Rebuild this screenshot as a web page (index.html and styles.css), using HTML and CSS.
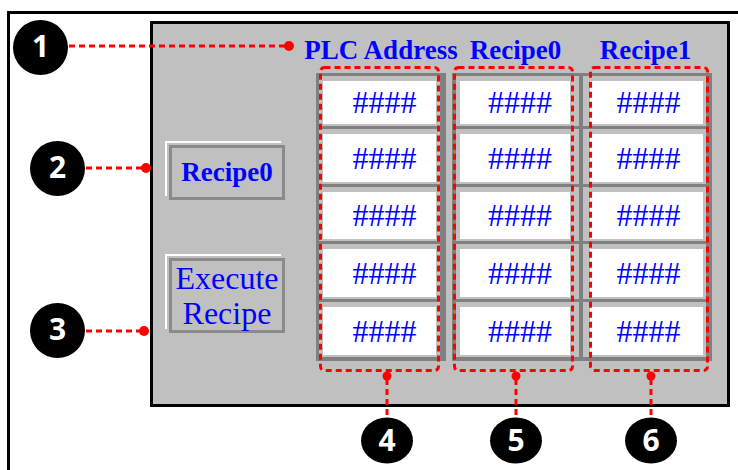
FILE: index.html
```html
<!DOCTYPE html>
<html lang="en">
<head>
  <meta charset="UTF-8" />
  <title>Recipe Screen</title>
  <link rel="stylesheet" href="styles.css">
</head>
<body>

  <div class="frame">
    <div class="panel">

      <!-- left side: recipe buttons -->
      <div class="side">
        <div class="btn btn-recipe">Recipe0</div>
        <div class="btn btn-exec">Execute<br>Recipe</div>
      </div>

      <!-- address and recipe tables -->
      <div class="tables">
        <div class="col col-addr">
          <div class="col-head">PLC Address</div>
          <div class="cells">
            <div class="cell"><span>####</span></div>
            <div class="cell"><span>####</span></div>
            <div class="cell"><span>####</span></div>
            <div class="cell"><span>####</span></div>
            <div class="cell"><span>####</span></div>
          </div>
        </div>
        <div class="col col-r0">
          <div class="col-head">Recipe0</div>
          <div class="cells">
            <div class="cell"><span>####</span></div>
            <div class="cell"><span>####</span></div>
            <div class="cell"><span>####</span></div>
            <div class="cell"><span>####</span></div>
            <div class="cell"><span>####</span></div>
          </div>
        </div>
        <div class="col col-r1">
          <div class="col-head">Recipe1</div>
          <div class="cells">
            <div class="cell"><span>####</span></div>
            <div class="cell"><span>####</span></div>
            <div class="cell"><span>####</span></div>
            <div class="cell"><span>####</span></div>
            <div class="cell"><span>####</span></div>
          </div>
        </div>
      </div>

    </div>
  </div>

  <!-- callouts -->
  <svg class="notes" width="738" height="470" viewBox="0 0 738 470">
    <g class="dash">
      <line x1="69" y1="46" x2="286" y2="46" />
      <line x1="86" y1="168" x2="142" y2="168" />
      <line x1="86" y1="331" x2="140" y2="331" />
      <line x1="387" y1="379" x2="387" y2="419" />
      <line x1="516" y1="379" x2="516" y2="419" />
      <line x1="651" y1="379" x2="651" y2="419" />
      <rect x="320.5" y="67.5" width="118" height="303" rx="4" />
      <rect x="454.5" y="67.5" width="118" height="303" rx="4" />
      <rect x="590.5" y="67.5" width="117" height="303" rx="4" />
    </g>
    <g class="dot">
      <circle cx="289" cy="46" r="5" />
      <circle cx="146" cy="168" r="5" />
      <circle cx="144" cy="331" r="5" />
      <circle cx="387" cy="376" r="4.5" />
      <circle cx="516" cy="376" r="4.5" />
      <circle cx="651" cy="376" r="4.5" />
    </g>
    <g class="badge">
      <circle cx="40.5" cy="47.5" r="27.5" />
      <circle cx="57.5" cy="168.5" r="27.5" />
      <circle cx="57.5" cy="330.5" r="27.5" />
      <ellipse cx="387" cy="440.5" rx="26" ry="23" />
      <ellipse cx="516" cy="440.5" rx="26" ry="23" />
      <ellipse cx="651" cy="440.5" rx="26" ry="23" />
    </g>
    <g class="num">
      <text x="40.5" y="57">1</text>
      <text x="57.5" y="178">2</text>
      <text x="57.5" y="340">3</text>
      <text x="387" y="451">4</text>
      <text x="516" y="451">5</text>
      <text x="651" y="451">6</text>
    </g>
  </svg>

</body>
</html>
```

FILE: styles.css
```css
body {
  margin: 0;
  width: 738px;
  height: 470px;
  overflow: hidden;
  background: #fff;
  position: relative;
  font-family: "Liberation Serif", "Times New Roman", serif;
}
.frame {
  margin: 11px 0 0 7px;
  height: 470px;
  border-top: 3px solid #000;
  border-left: 3px solid #000;
  box-sizing: border-box;
  padding: 7px 0 0 140px;
}
.panel {
  width: 580px;
  height: 386px;
  box-sizing: border-box;
  border: 3px solid #000;
  background: #c0c0c0;
  display: flex;
}
.side {
  width: 163px;
  flex-shrink: 0;
  padding: 121px 0 0 16px;
  box-sizing: border-box;
}
.btn {
  width: 116px;
  box-sizing: border-box;
  border: 3px solid #8a8a8a;
  box-shadow: -2px -2px 0 #c0c0c0, -4px -4px 0 #fff;
  color: #0000ff;
  display: flex;
  flex-direction: column;
  align-items: center;
  justify-content: center;
  text-align: center;
}
.btn-recipe {
  height: 55px;
  margin-bottom: 58px;
  font-size: 27px;
  font-weight: bold;
}
.btn-exec {
  height: 75px;
  font-size: 32px;
  line-height: 35px;
  white-space: nowrap;
}
.tables {
  display: flex;
}
.col-head {
  height: 49px;
  padding-top: 11px;
  box-sizing: border-box;
  display: flex;
  justify-content: center;
  font-size: 27px;
  line-height: 30px;
  font-weight: bold;
  color: #0000ff;
  white-space: nowrap;
}
.cells {
  display: grid;
  grid-template-rows: 53px 58px 57px 58px 58px;
  border-bottom: 4px solid #808080;
}
.cell {
  border-top: 3px solid #808080;
  padding: 5px 4px 2px 4px;
  box-sizing: border-box;
}
.cell span {
  display: flex;
  align-items: center;
  justify-content: center;
  height: 100%;
  padding-left: 10px;
  box-sizing: border-box;
  background: #fff;
  color: #0000ff;
  font-size: 32px;
}
.col-addr {
  width: 130px;
  margin-right: 6px;
}
.col-addr .cells {
  border-left: 3px solid #808080;
  border-right: 6px solid #808080;
}
.col-r0 {
  width: 127px;
}
.col-r0 .cells {
  border-left: 4px solid #808080;
}
.col-r0 .cell {
  padding-right: 9px;
}
.col-r1 {
  width: 133px;
}
.col-r1 .cells {
  border-left: 4px solid #808080;
  border-right: 6px solid #808080;
}
.col-r1 .cell {
  padding: 5px 3px 2px 7px;
}
.col-r1 .cell span {
  padding-left: 4px;
}
.notes {
  position: absolute;
  top: 0;
  left: 0;
  pointer-events: none;
}
.dash line,
.dash rect {
  fill: none;
  stroke: #ff0000;
  stroke-width: 3;
  stroke-dasharray: 6 4;
}
.dot circle {
  fill: #ff0000;
}
.badge circle,
.badge ellipse {
  fill: #000;
}
.num text {
  fill: #fff;
  font-family: "Noto Sans", "DejaVu Sans", sans-serif;
  font-weight: bold;
  font-size: 30px;
  text-anchor: middle;
}
```
